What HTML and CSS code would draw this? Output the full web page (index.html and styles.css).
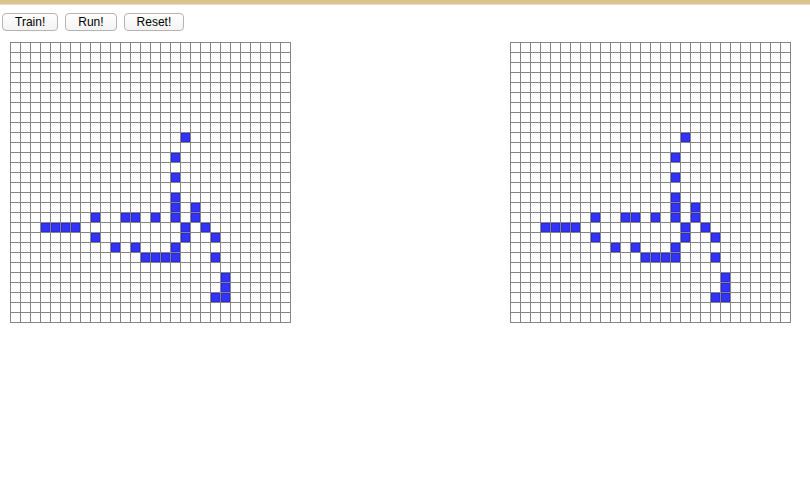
FILE: index.html
```html
<!DOCTYPE html>
<html>
<head>
<meta charset="utf-8">
<title>Hopfield</title>
<link rel="stylesheet" href="styles.css">
</head>
<body>
<div class="topbar"></div>
<div class="controls">
  <button class="btn">Train!</button>
  <button class="btn">Run!</button>
  <button class="btn">Reset!</button>
</div>
<div class="boards">
  <div class="board" id="input"></div>
  <div class="board" id="output"></div>
</div>
<script src="script.js"></script>
</body>
</html>
```
FILE: styles.css
```css
html, body {
  margin: 0;
  padding: 0;
  background: #ffffff;
  font-family: "Liberation Sans", Arial, sans-serif;
}
.topbar {
  height: 4px;
  background: #d9c38f;
  border-bottom: 1px solid #ece0c0;
}
.controls {
  display: flex;
  gap: 7px;
  padding: 8px 0 0 2px;
  height: 18px;
}
.btn {
  height: 18px;
  padding: 0 12px;
  margin: 0;
  font-family: "Liberation Sans", Arial, sans-serif;
  font-size: 12px;
  line-height: 16px;
  color: #000;
  background: linear-gradient(#ffffff, #f3f3f3);
  border: 1px solid #b4b4b4;
  border-radius: 4px;
}
.boards {
  display: flex;
  gap: 219px;
  padding: 11px 0 0 10px;
}
.board {
  display: grid;
  grid-template-columns: repeat(28, 9px);
  grid-auto-rows: 9px;
  gap: 1px;
  padding: 1px;
  background: #858585;
}
.cell {
  background: #ffffff;
}
.cell.on {
  background: #3232f8;
  box-shadow: inset 0 0 0 1px #2a2ad8;
}
```
FILE: script.js
```js
(function () {
  var on = {
    9: [17],
    11: [16],
    13: [16],
    15: [16],
    16: [16, 18],
    17: [8, 11, 12, 14, 16, 18],
    18: [3, 4, 5, 6, 17, 19],
    19: [8, 17, 20],
    20: [10, 12, 16],
    21: [13, 14, 15, 16, 20],
    23: [21],
    24: [21],
    25: [20, 21]
  };
  ["input", "output"].forEach(function (id) {
    var board = document.getElementById(id);
    for (var r = 0; r < 28; r++) {
      for (var c = 0; c < 28; c++) {
        var d = document.createElement("div");
        d.className = "cell";
        if (on[r] && on[r].indexOf(c) !== -1) d.className += " on";
        board.appendChild(d);
      }
    }
  });
})();
```
